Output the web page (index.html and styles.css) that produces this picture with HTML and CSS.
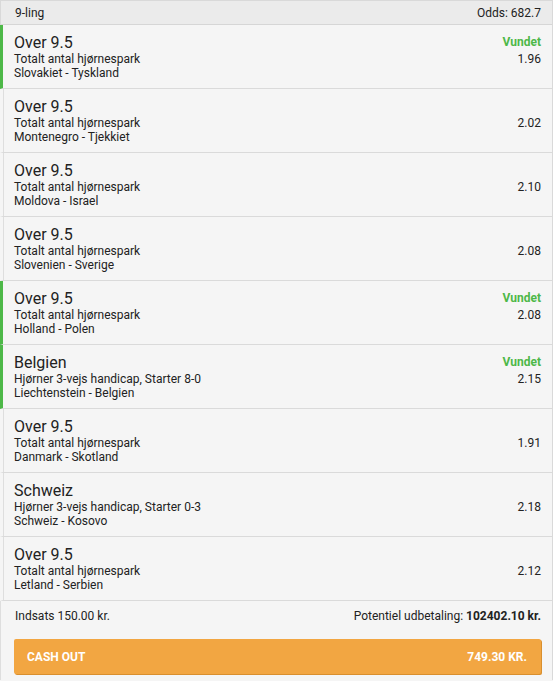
FILE: index.html
```html
<!DOCTYPE html>
<html lang="da">
<head>
<meta charset="utf-8">
<link rel="stylesheet" href="styles.css">
</head>
<body>
<div class="slip">
  <div class="head"><span>9-ling</span><span>Odds: 682.7</span></div>

  <div class="row won">
    <div class="info"><div class="title">Over 9.5</div><div class="sub">Totalt antal hjørnespark</div><div class="sub">Slovakiet - Tyskland</div></div>
    <div class="right"><div class="status">Vundet</div><div class="odds">1.96</div></div>
  </div>
  <div class="row">
    <div class="info"><div class="title">Over 9.5</div><div class="sub">Totalt antal hjørnespark</div><div class="sub">Montenegro - Tjekkiet</div></div>
    <div class="right"><div class="status"></div><div class="odds">2.02</div></div>
  </div>
  <div class="row">
    <div class="info"><div class="title">Over 9.5</div><div class="sub">Totalt antal hjørnespark</div><div class="sub">Moldova - Israel</div></div>
    <div class="right"><div class="status"></div><div class="odds">2.10</div></div>
  </div>
  <div class="row">
    <div class="info"><div class="title">Over 9.5</div><div class="sub">Totalt antal hjørnespark</div><div class="sub">Slovenien - Sverige</div></div>
    <div class="right"><div class="status"></div><div class="odds">2.08</div></div>
  </div>
  <div class="row won">
    <div class="info"><div class="title">Over 9.5</div><div class="sub">Totalt antal hjørnespark</div><div class="sub">Holland - Polen</div></div>
    <div class="right"><div class="status">Vundet</div><div class="odds">2.08</div></div>
  </div>
  <div class="row won">
    <div class="info"><div class="title">Belgien</div><div class="sub">Hjørner 3-vejs handicap, Starter 8-0</div><div class="sub">Liechtenstein - Belgien</div></div>
    <div class="right"><div class="status">Vundet</div><div class="odds">2.15</div></div>
  </div>
  <div class="row">
    <div class="info"><div class="title">Over 9.5</div><div class="sub">Totalt antal hjørnespark</div><div class="sub">Danmark - Skotland</div></div>
    <div class="right"><div class="status"></div><div class="odds">1.91</div></div>
  </div>
  <div class="row">
    <div class="info"><div class="title">Schweiz</div><div class="sub">Hjørner 3-vejs handicap, Starter 0-3</div><div class="sub">Schweiz - Kosovo</div></div>
    <div class="right"><div class="status"></div><div class="odds">2.18</div></div>
  </div>
  <div class="row">
    <div class="info"><div class="title">Over 9.5</div><div class="sub">Totalt antal hjørnespark</div><div class="sub">Letland - Serbien</div></div>
    <div class="right"><div class="status"></div><div class="odds">2.12</div></div>
  </div>

  <div class="foot">
    <div class="totals"><span>Indsats 150.00 kr.</span><span>Potentiel udbetaling: <b>102402.10 kr.</b></span></div>
    <div class="cashout"><span>CASH OUT</span><span>749.30 KR.</span></div>
  </div>
</div>
</body>
</html>
```

FILE: styles.css
```css
* { box-sizing: border-box; }
html, body { margin: 0; padding: 0; background: #f5f5f5; }
body { font-family: Roboto, "Liberation Sans", sans-serif; color: #222; font-size: 12px; }

.slip {
  width: 553px;
  border-right: 1px solid #d9d9d9;
  background: #f5f5f5;
}

.head {
  display: flex;
  justify-content: space-between;
  align-items: center;
  height: 25px;
  padding: 0 11px 0 14px;
  background: #ebebeb;
  border: 1px solid #d9d9d9;
  border-right: none;
  border-bottom-color: #d6d6d6;
  font-size: 12px;
  line-height: 14px;
  color: #222;
}

.row {
  display: flex;
  justify-content: space-between;
  height: 64px;
  padding: 9px 11px 0 11px;
  border-left: 3px solid transparent;
  border-bottom: 1px solid #dadada;
  box-shadow: inset 1px 0 0 #dedede;
}
.row.won { border-left-color: #4db848; box-shadow: none; }

.title { font-size: 16px; line-height: 18px; color: #222; }
.sub { font-size: 12px; line-height: 14px; color: #222; }

.right { text-align: right; }
.status { height: 18px; font-size: 12px; line-height: 16px; font-weight: 700; color: #4db848; }
.odds { font-size: 12px; line-height: 14px; }

.foot { padding: 8px 11px 6px 13px; border-left: 1px solid #dedede; }
.totals {
  display: flex;
  justify-content: space-between;
  line-height: 14px;
  padding-left: 1px;
}
.totals b { font-weight: 700; }

.cashout {
  margin-top: 16px;
  display: flex;
  justify-content: space-between;
  align-items: center;
  height: 35px;
  padding: 0 14px 0 13px;
  background: #f2a642;
  color: #fff;
  font-weight: 700;
  font-size: 12px;
  border-radius: 2px;
  box-shadow: 1px 1px 0 #d98f2e;
}
```
